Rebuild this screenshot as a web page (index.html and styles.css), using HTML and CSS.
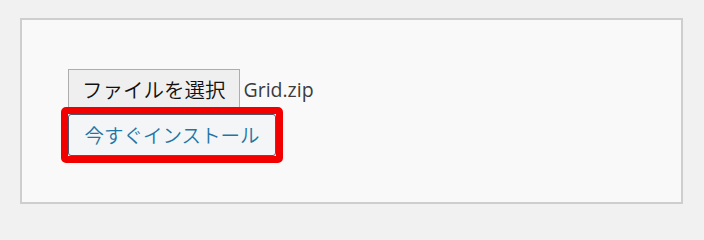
FILE: index.html
```html
<!DOCTYPE html>
<html lang="ja">
<head>
<meta charset="utf-8">
<title>Upload</title>
<link rel="stylesheet" href="styles.css">
</head>
<body>
<div class="panel">
  <div class="file-row">
    <span class="file-btn">ファイルを選択</span>
    <span class="file-name">Grid.zip</span>
  </div>
  <div class="install-wrap">
    <span class="install-btn">今すぐインストール</span>
    <span class="mark"></span>
  </div>
</div>
</body>
</html>
```
FILE: styles.css
```css
html, body {
  margin: 0;
  padding: 0;
  background: #f1f1f1;
}
body {
  padding-top: 18px;
  padding-left: 20px;
  font-family: "Noto Sans CJK JP", "Open Sans", sans-serif;
}
.panel {
  box-sizing: border-box;
  width: 663px;
  height: 186px;
  border: 2px solid #cecece;
  background: #f9f9f9;
  padding: 49px 0 0 46px;
}
.file-row {
  display: flex;
  align-items: center;
  height: 40px;
}
.file-btn {
  box-sizing: border-box;
  display: flex;
  align-items: center;
  height: 40px;
  padding: 0 13px;
  border: 1px solid #adadad;
  background: #efefef;
  color: #111;
  font-size: 20.5px;
  font-weight: 350;
  line-height: 1;
}
.file-name {
  margin-left: 4px;
  font-family: "Open Sans", "Noto Sans", sans-serif;
  font-size: 19.5px;
  color: #3c3c3c;
}
.install-wrap {
  position: relative;
  display: inline-block;
  margin-top: 5px;
}
.install-btn {
  box-sizing: border-box;
  display: flex;
  align-items: center;
  height: 42px;
  padding: 0 15.5px;
  border: 1px solid #50566a;
  border-radius: 3px;
  background: #f3f5f6;
  color: #1f76a6;
  font-size: 19.5px;
  font-weight: 350;
  line-height: 1;
}
.mark {
  position: absolute;
  left: -7px;
  top: -7px;
  right: -7px;
  bottom: -7px;
  border: 7px solid #f20000;
  border-radius: 5px;
}
```
